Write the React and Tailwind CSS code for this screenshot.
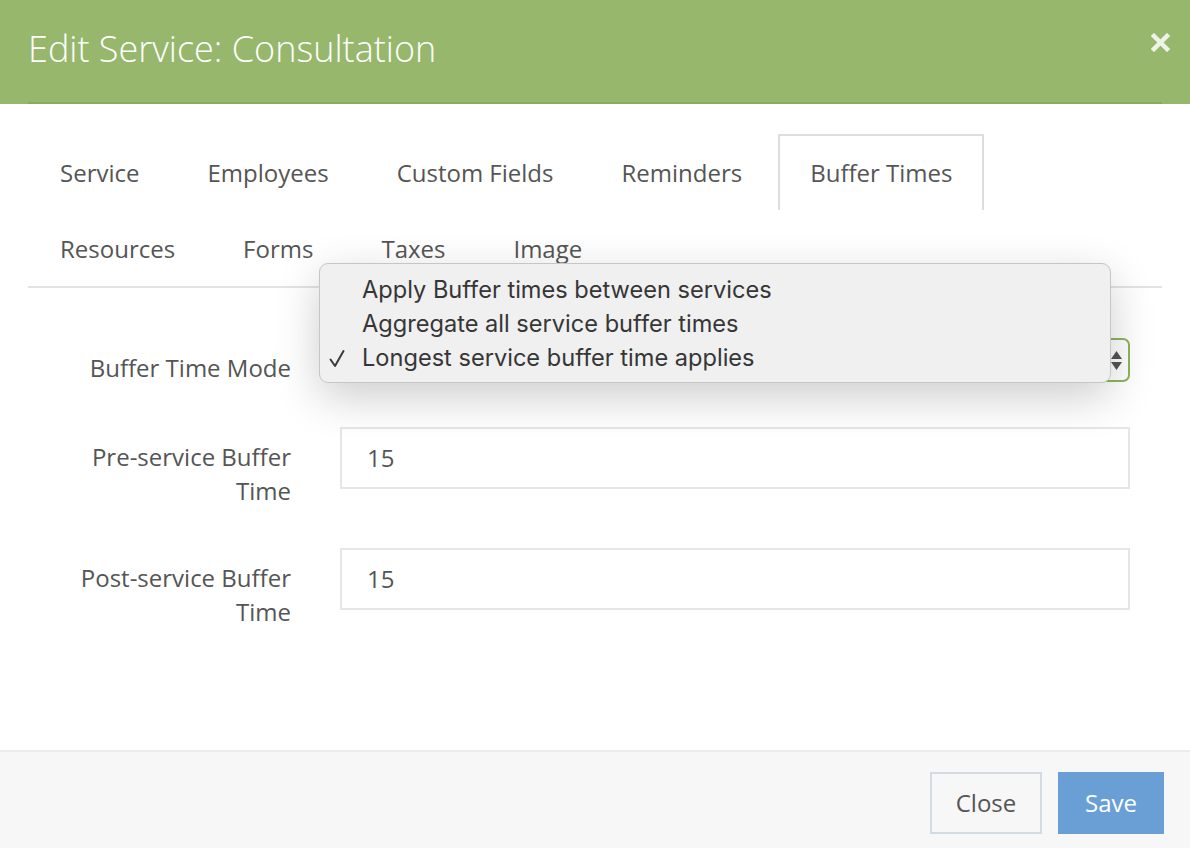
import React from "react";

const tabsRow1 = ["Service", "Employees", "Custom Fields", "Reminders", "Buffer Times"];
const tabsRow2 = ["Resources", "Forms", "Taxes", "Image"];

function Tab({ label, active }) {
  return (
    <div
      className={
        "h-[76px] px-[30px] flex items-center text-[24px] text-[#555] border-2 border-b-0 " +
        (active ? "border-[#dddddd] bg-white" : "border-transparent")
      }
    >
      {label}
    </div>
  );
}

function FieldLabel({ children }) {
  return (
    <div className="w-[263px] text-right pt-[13px] text-[24px] leading-[34px] text-[#555]">
      {children}
    </div>
  );
}

function Check() {
  return (
    <svg width="16" height="19" viewBox="0 0 16 19">
      <path d="M1.5 10.5 L6 17 L14.5 2" fill="none" stroke="#3a3a3a" strokeWidth="2" strokeLinecap="round" strokeLinejoin="round" />
    </svg>
  );
}

export default function App() {
  return (
    <div
      className="relative w-[1190px] h-[848px] bg-white flex flex-col overflow-hidden"
      style={{ fontFamily: '"Open Sans", sans-serif' }}
    >
      {/* Header */}
      <div className="relative h-[104px] bg-[#97b76d] px-[28px] shrink-0">
        <div className="h-full border-b-2 border-[#88a95e] flex items-center pb-[4px]">
          <h1 className="text-[36px] font-light text-white">Edit Service: Consultation</h1>
        </div>
        <button className="absolute right-[19px] top-[31px] w-[22px] h-[22px] flex items-center justify-center">
          <svg width="19" height="19" viewBox="0 0 19 19">
            <path d="M3 3 L16 16 M16 3 L3 16" stroke="#eef3e8" strokeWidth="4.5" strokeLinecap="square" />
          </svg>
        </button>
      </div>

      {/* Body */}
      <div className="flex-1 px-[28px]">
        <div className="mt-[30px] border-b-2 border-[#e3e3e3]">
          <div className="flex gap-x-[4px]">
            {tabsRow1.map((t) => (
              <Tab key={t} label={t} active={t === "Buffer Times"} />
            ))}
          </div>
          <div className="flex gap-x-[4px]">
            {tabsRow2.map((t) => (
              <Tab key={t} label={t} />
            ))}
          </div>
        </div>

        <div className="mt-[50px] flex flex-col gap-[40px]">
          <div className="flex gap-[49px] h-[49px]">
            <FieldLabel>Buffer Time Mode</FieldLabel>
            <div className="w-[790px] h-[44px] border-2 border-[#8db55f] rounded-[7px] bg-white flex items-center justify-end pr-[6px]">
              <div className="flex flex-col items-center gap-[3px]">
                <svg width="11" height="8" viewBox="0 0 11 8"><path d="M5.5 0 L11 8 L0 8 Z" fill="#555" /></svg>
                <svg width="11" height="8" viewBox="0 0 11 8"><path d="M0 0 L11 0 L5.5 8 Z" fill="#555" /></svg>
              </div>
            </div>
          </div>

          <div className="flex gap-[49px]">
            <FieldLabel>
              Pre-service Buffer
              <br />
              Time
            </FieldLabel>
            <div className="w-[790px] h-[62px] border-2 border-[#e6e6e6] flex items-center pl-[25px] text-[24px] text-[#555]">
              15
            </div>
          </div>

          <div className="flex gap-[49px]">
            <FieldLabel>
              Post-service Buffer
              <br />
              Time
            </FieldLabel>
            <div className="w-[790px] h-[62px] border-2 border-[#e6e6e6] flex items-center pl-[25px] text-[24px] text-[#555]">
              15
            </div>
          </div>
        </div>
      </div>

      {/* Footer */}
      <div className="h-[98px] shrink-0 border-t-2 border-[#ececec] bg-[#f7f7f7] flex items-start justify-end gap-[16px] pr-[26px] pt-[20px]">
        <button className="w-[112px] h-[62px] border-2 border-[#d3dae4] text-[24px] text-[#555] flex items-center justify-center">
          Close
        </button>
        <button className="w-[106px] h-[62px] bg-[#6a9fd6] text-[24px] text-white flex items-center justify-center">
          Save
        </button>
      </div>

      {/* Native select popup menu */}
      <div
        className="absolute left-[319px] top-[263px] w-[792px] h-[120px] bg-[#f0f0f0] border border-[#c6c6c6] rounded-[9px] shadow-[0_14px_45px_rgba(0,0,0,0.2)] pt-[9px]"
        style={{ fontFamily: 'Inter, "Open Sans", sans-serif' }}
      >
        {[
          { t: "Apply Buffer times between services", c: false },
          { t: "Aggregate all service buffer times", c: false },
          { t: "Longest service buffer time applies", c: true },
        ].map((o) => (
          <div key={o.t} className="h-[34px] flex items-center text-[23.6px] text-[#363636]">
            <span className="w-[42px] flex justify-end pr-[17px]">{o.c ? <Check /> : null}</span>
            <span>{o.t}</span>
          </div>
        ))}
      </div>
    </div>
  );
}
